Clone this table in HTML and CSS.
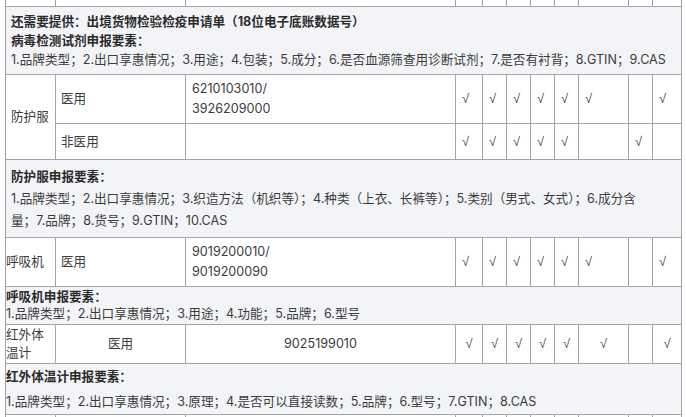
FILE: index.html
```html
<!DOCTYPE html>
<html lang="zh">
<head>
<meta charset="utf-8">
<link rel="stylesheet" href="styles.css">
</head>
<body>
<div class="wrap">
<table class="t">
  <colgroup>
    <col class="w50"><col class="w130"><col class="w270"><col class="w27">
    <col class="w24"><col class="w24"><col class="w24"><col class="w24">
    <col class="w50"><col class="w24"><col class="w29">
  </colgroup>
  <tr class="r-top"><td></td><td></td><td></td><td></td><td></td><td></td><td></td><td></td><td></td><td></td><td></td></tr>
  <tr class="r-sec1">
    <td colspan="11" class="sec">
      <div class="b">还需要提供：出境货物检验检疫申请单（18位电子底账数据号）</div>
      <div class="b">病毒检测试剂申报要素：</div>
      <div>1.品牌类型；2.出口享惠情况；3.用途；4.包装；5.成分；6.是否血源筛查用诊断试剂；7.是否有衬背；8.GTIN；9.CAS</div>
    </td>
  </tr>
  <tr class="r-a">
    <td rowspan="2">防护服</td>
    <td>医用</td>
    <td class="code">6210103010/<br>3926209000</td>
    <td class="ck">√</td><td class="ck">√</td><td class="ck">√</td><td class="ck">√</td><td class="ck">√</td><td class="ck">√</td><td class="ck"></td><td class="ck">√</td>
  </tr>
  <tr class="r-b">
    <td>非医用</td>
    <td class="code"></td>
    <td class="ck">√</td><td class="ck">√</td><td class="ck">√</td><td class="ck">√</td><td class="ck">√</td><td class="ck"></td><td class="ck">√</td><td class="ck"></td>
  </tr>
  <tr class="r-sec2">
    <td colspan="11" class="sec sec2">
      <div class="b">防护服申报要素：</div>
      <div>1.品牌类型；2.出口享惠情况；3.织造方法（机织等）；4.种类（上衣、长裤等）；5.类别（男式、女式）；6.成分含<br>量；7.品牌；8.货号；9.GTIN；10.CAS</div>
    </td>
  </tr>
  <tr class="r-c">
    <td class="flush">呼吸机</td>
    <td>医用</td>
    <td class="code">9019200010/<br>9019200090</td>
    <td class="ck">√</td><td class="ck">√</td><td class="ck">√</td><td class="ck">√</td><td class="ck">√</td><td class="ck">√</td><td class="ck"></td><td class="ck">√</td>
  </tr>
  <tr class="r-sec3">
    <td colspan="11" class="sec flush sec3">
      <div class="b">呼吸机申报要素：</div>
      <div>1.品牌类型；2.出口享惠情况；3.用途；4.功能；5.品牌；6.型号</div>
    </td>
  </tr>
  <tr class="r-d mid">
    <td class="flush name2">红外体温计</td>
    <td>医用</td>
    <td>9025199010</td>
    <td class="ck">√</td><td class="ck">√</td><td class="ck">√</td><td class="ck">√</td><td class="ck">√</td><td class="ck">√</td><td class="ck"></td><td class="ck">√</td>
  </tr>
  <tr class="r-sec4">
    <td colspan="11" class="sec flush sec4">
      <div class="b">红外体温计申报要素：</div>
      <div>1.品牌类型；2.出口享惠情况；3.原理；4.是否可以直接读数；5.品牌；6.型号；7.GTIN；8.CAS</div>
    </td>
  </tr>
  <tr class="r-bottom"><td></td><td></td><td></td><td></td><td></td><td></td><td></td><td></td><td></td><td></td><td></td></tr>
</table>
</div>
</body>
</html>
```

FILE: styles.css
```css
html, body {
  margin: 0;
  padding: 0;
  background: #ffffff;
  overflow: hidden;
}
body {
  font-family: Inter, "Noto Sans CJK SC", sans-serif;
  font-size: 12.6px;
  color: #3b3b3b;
}
.wrap {
  padding-left: 5px;
}
.t {
  border-collapse: collapse;
  table-layout: fixed;
  margin-top: -20px;
}
.w50 { width: 50px; }
.w130 { width: 130px; }
.w270 { width: 270px; }
.w27 { width: 27px; }
.w24 { width: 24px; }
.w29 { width: 29px; }
.t td {
  border: 1px solid #a4a4a4;
  padding: 0 5px;
  vertical-align: middle;
  line-height: 20px;
  white-space: nowrap;
  overflow: hidden;
}
.t td.code { padding-left: 6px; }
.t td.ck {
  padding: 0 0 0 6px;
  font-family: "Liberation Sans", sans-serif;
  font-size: 13px;
  color: #4a4a4a;
}
.t td.flush { padding-left: 0; }
.r-top { height: 26px; }
.r-sec1 { height: 68px; }
.r-a { height: 49px; }
.r-b { height: 36px; }
.r-sec2 { height: 78px; }
.r-c { height: 49px; }
.r-sec3 { height: 38px; }
.r-d { height: 39px; }
.r-sec4 { height: 51px; }
.r-bottom { height: 20px; }
.t td.sec {
  background: #f3f4f8;
  line-height: 19px;
}
.t td.sec2 { line-height: 22px; }
.t td.sec3 { line-height: 16.5px; }
.t td.sec4 { line-height: 17px; }
.sec4 .b { margin-bottom: 8px; }
.b {
  font-weight: 700;
  color: #2b2b2b;
}
.mid td,
.mid td.ck {
  text-align: center;
  padding: 0;
}
.mid td.name2 {
  text-align: left;
  white-space: normal;
  line-height: 18px;
}
```
